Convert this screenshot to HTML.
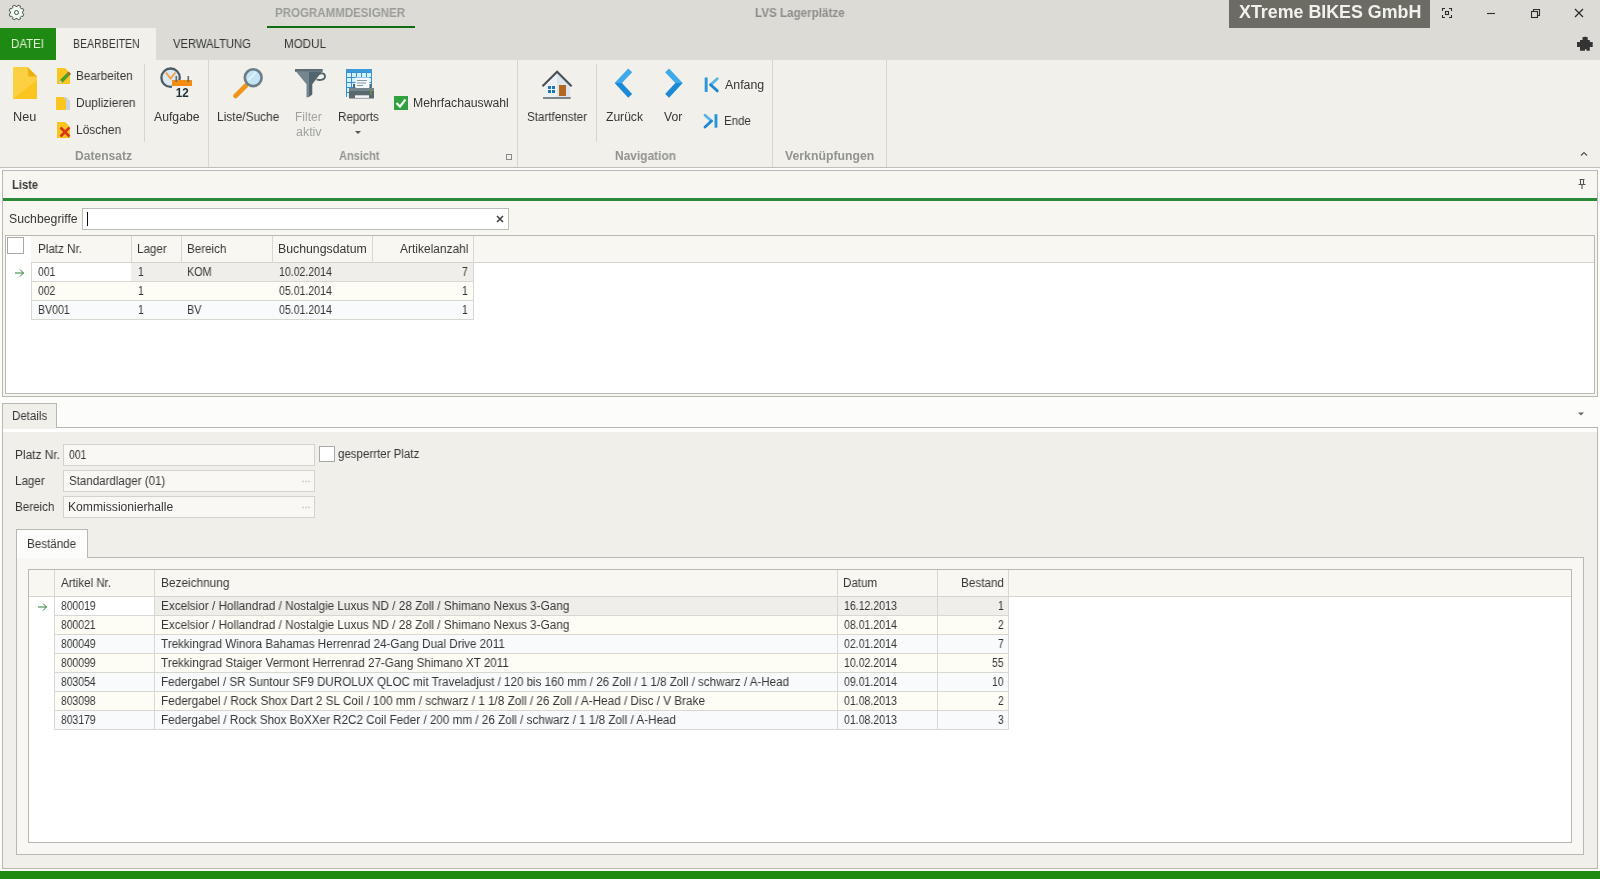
<!DOCTYPE html>
<html><head><meta charset="utf-8">
<style>
*{margin:0;padding:0;box-sizing:border-box}
html,body{width:1600px;height:879px;overflow:hidden;background:#fcfcfb;font-family:"Liberation Sans",sans-serif;font-size:12px;color:#3b3b3b}
.a{position:absolute}
.t{position:absolute;white-space:nowrap;transform-origin:0 0;will-change:transform}
svg{overflow:visible}
</style></head><body>
<div class="a" style="left:0px;top:0px;width:1600px;height:28px;background:#dcdbd5;"></div>
<svg class="a" style="left:7.5px;top:4px" width="17" height="17" viewBox="0 0 17 17"><path d="M14.55 9.31 L15.81 10.16 L14.84 12.50 L13.35 12.20 L12.20 13.35 L12.50 14.84 L10.16 15.81 L9.31 14.55 L7.69 14.55 L6.84 15.81 L4.50 14.84 L4.80 13.35 L3.65 12.20 L2.16 12.50 L1.19 10.16 L2.45 9.31 L2.45 7.69 L1.19 6.84 L2.16 4.50 L3.65 4.80 L4.80 3.65 L4.50 2.16 L6.84 1.19 L7.69 2.45 L9.31 2.45 L10.16 1.19 L12.50 2.16 L12.20 3.65 L13.35 4.80 L14.84 4.50 L15.81 6.84 L14.55 7.69Z" fill="#f2faf0" stroke="#4a504a" stroke-width="1"/><circle cx="8.5" cy="8.5" r="2" fill="none" stroke="#4a504a" stroke-width="1"/></svg>
<div class="t" style="left:275.23px;top:6.64px;font-size:12px;line-height:12px;color:#9b9b99;font-weight:bold;transform:scaleX(0.9606);">PROGRAMMDESIGNER</div>
<div class="a" style="left:267px;top:26px;width:148px;height:2px;background:#0f6c10;"></div>
<div class="t" style="left:754.82px;top:7.24px;font-size:12px;line-height:12px;color:#8d8d8b;font-weight:bold;transform:scaleX(0.9699);">LVS Lagerplätze</div>
<div class="a" style="left:1229px;top:0px;width:201px;height:28px;background:#6c6b64;"></div>
<div class="t" style="left:1238.84px;top:3.69px;font-size:17.5px;line-height:17.5px;color:#f2f2ec;font-weight:bold;transform:scaleX(1.0191);">XTreme BIKES GmbH</div>
<svg class="a" style="left:1440px;top:6px" width="150" height="14" viewBox="0 0 150 14">
<g fill="none" stroke="#2e2e2e" stroke-width="1.1">
<path d="M2.5 5V2.5H5M9 2.5H11.5V5M11.5 9V11.5H9M5 11.5H2.5V9"/>
<rect x="5.5" y="5.5" width="3" height="3"/>
<path d="M47 7.5H55"/>
<rect x="91.5" y="5.5" width="6" height="6"/><path d="M93.5 5.5V3.5H99.5V9.5H97.5"/>
<path d="M135 3L143 11M143 3L135 11" stroke-width="1.3"/>
</g></svg>
<div class="a" style="left:0px;top:28px;width:1600px;height:32px;background:#dcdbd5;"></div>
<div class="a" style="left:0px;top:28px;width:56px;height:32px;background:#1e8a14;"></div>
<div class="t" style="left:11.36px;top:37.64px;font-size:12px;line-height:12px;color:#e4f6d4;transform:scaleX(0.9581);">DATEI</div>
<div class="a" style="left:56px;top:28px;width:100px;height:32px;background:#f1f0eb;"></div>
<div class="t" style="left:72.84px;top:37.54px;font-size:12px;line-height:12px;color:#363636;transform:scaleX(0.8777);">BEARBEITEN</div>
<div class="t" style="left:172.95px;top:37.54px;font-size:12px;line-height:12px;color:#363636;transform:scaleX(0.9370);">VERWALTUNG</div>
<div class="t" style="left:283.75px;top:37.54px;font-size:12px;line-height:12px;color:#363636;transform:scaleX(0.9678);">MODUL</div>
<svg class="a" style="left:1570px;top:30px" width="30" height="30" viewBox="0 0 30 30">
<path fill="#333" d="M12.5 7.3Q15 6.3 17.7 7.3V10H19.8V12H22.7V17H19.8V20.8H16.5V19.3H15V20.8H10V17H7V12H10V10H12.5z"/></svg>
<div class="a" style="left:0px;top:60px;width:1600px;height:107px;background:#f1f0eb;"></div>
<div class="a" style="left:0px;top:167px;width:1600px;height:1px;background:#c0bfba;"></div>
<div class="a" style="left:208px;top:60px;width:1px;height:107px;background:#d6d5d0;"></div>
<div class="a" style="left:517px;top:60px;width:1px;height:107px;background:#d6d5d0;"></div>
<div class="a" style="left:772px;top:60px;width:1px;height:107px;background:#d6d5d0;"></div>
<div class="a" style="left:886px;top:60px;width:1px;height:107px;background:#d6d5d0;"></div>
<div class="a" style="left:144px;top:64px;width:1px;height:78px;background:#d6d5d0;"></div>
<div class="a" style="left:596px;top:64px;width:1px;height:78px;background:#d6d5d0;"></div>
<div class="t" style="left:75.49px;top:150.14px;font-size:12px;line-height:12px;color:#929290;font-weight:bold;transform:scaleX(1.0046);">Datensatz</div>
<div class="t" style="left:339.23px;top:150.14px;font-size:12px;line-height:12px;color:#929290;font-weight:bold;transform:scaleX(0.9184);">Ansicht</div>
<div class="t" style="left:614.80px;top:150.14px;font-size:12px;line-height:12px;color:#929290;font-weight:bold;transform:scaleX(0.9935);">Navigation</div>
<div class="t" style="left:784.52px;top:150.14px;font-size:12px;line-height:12px;color:#929290;font-weight:bold;transform:scaleX(1.0219);">Verknüpfungen</div>
<div class="a" style="left:506px;top:154px;width:6px;height:6px;border:1px solid #8a8a88;"></div>
<svg class="a" style="left:1579px;top:150px" width="10" height="8" viewBox="0 0 10 8"><path d="M2 5.5L5 2.5L8 5.5" fill="none" stroke="#555" stroke-width="1.2"/></svg>
<div class="t" style="left:13.36px;top:110.64px;font-size:12px;line-height:12px;color:#363636;transform:scaleX(1.0578);">Neu</div>
<div class="t" style="left:76.04px;top:70.34px;font-size:12px;line-height:12px;color:#363636;transform:scaleX(0.9773);">Bearbeiten</div>
<div class="t" style="left:76.02px;top:96.54px;font-size:12px;line-height:12px;color:#363636;transform:scaleX(0.9921);">Duplizieren</div>
<div class="t" style="left:76.02px;top:123.64px;font-size:12px;line-height:12px;color:#363636;transform:scaleX(0.9954);">Löschen</div>
<div class="t" style="left:154.48px;top:110.54px;font-size:12px;line-height:12px;color:#363636;transform:scaleX(1.0193);">Aufgabe</div>
<div class="t" style="left:217.22px;top:110.54px;font-size:12px;line-height:12px;color:#363636;transform:scaleX(0.9937);">Liste/Suche</div>
<div class="t" style="left:295.21px;top:110.54px;font-size:12px;line-height:12px;color:#a2a2a0;">Filter</div>
<div class="t" style="left:295.67px;top:125.84px;font-size:12px;line-height:12px;color:#a2a2a0;transform:scaleX(1.0364);">aktiv</div>
<div class="t" style="left:338.24px;top:110.54px;font-size:12px;line-height:12px;color:#363636;transform:scaleX(0.9705);">Reports</div>
<svg class="a" style="left:354px;top:130px" width="8" height="5" viewBox="0 0 8 5"><path d="M1 1H7L4 4z" fill="#555"/></svg>
<div class="t" style="left:413.30px;top:96.84px;font-size:12px;line-height:12px;color:#363636;transform:scaleX(1.0189);">Mehrfachauswahl</div>
<div class="t" style="left:526.77px;top:110.84px;font-size:12px;line-height:12px;color:#363636;transform:scaleX(0.9693);">Startfenster</div>
<div class="t" style="left:605.82px;top:110.84px;font-size:12px;line-height:12px;color:#363636;transform:scaleX(1.0080);">Zurück</div>
<div class="t" style="left:663.85px;top:110.84px;font-size:12px;line-height:12px;color:#363636;transform:scaleX(1.0136);">Vor</div>
<div class="t" style="left:724.58px;top:79.14px;font-size:12px;line-height:12px;color:#363636;transform:scaleX(1.0313);">Anfang</div>
<div class="t" style="left:723.66px;top:114.54px;font-size:12px;line-height:12px;color:#363636;transform:scaleX(0.9583);">Ende</div>
<svg class="a" style="left:0;top:60px" width="890" height="80" viewBox="0 60 890 80">
<!-- Neu -->
<path d="M13 67H27.5L37 76.5V99H13z" fill="#fbc520"/>
<path d="M13 67H27.5L37 76.5V80L13 99z" fill="#fdd451" opacity="0.7"/>
<path d="M27.5 67L37 76.5H28.5z" fill="#e9b212"/>
<!-- Bearbeiten -->
<path d="M57 68H65L70 73V84H57z" fill="#fbc520"/>
<path d="M58.5 83.5L60 80L67 73L69.5 75.5L62.5 82.5z" fill="#4c9e2a"/><path d="M67 73L68.5 71.5L71 74L69.5 75.5z" fill="#9a6420"/><path d="M58.5 83.5L60 80L62.5 82.5z" fill="#e8d8a0"/>
<!-- Duplizieren -->
<path d="M63 97H66L70 101V110H63z" fill="#c8d3dc"/>
<path d="M56 97H63L66 100V110H56z" fill="#fbc520"/>
<!-- Loeschen -->
<path d="M57 122H65L70 127V138H57z" fill="#fbc520"/>
<path d="M60.5 127.5L69.5 136.5M69.5 127.5L60.5 136.5" stroke="#d8361c" stroke-width="2.6"/>
<!-- Aufgabe -->
<circle cx="170.6" cy="77.7" r="9.2" fill="#dde8ef" stroke="#4b5c64" stroke-width="2.3"/>
<path d="M166 72.5L170.5 78.5L175.5 72.5" fill="none" stroke="#f0a040" stroke-width="1.8"/>
<rect x="172" y="80" width="20" height="6" fill="#f28d12"/>
<rect x="175.5" y="76" width="1.6" height="6" fill="#6a6a6a"/><rect x="187.5" y="76" width="1.6" height="6" fill="#6a6a6a"/>
<rect x="172" y="86" width="20" height="12" fill="#f1f0eb"/>
<text x="175.8" y="97.2" font-family="Liberation Sans" font-weight="bold" font-size="12" fill="#1f3036" textLength="13" lengthAdjust="spacingAndGlyphs">12</text>
<!-- Liste/Suche -->
<path d="M246 85.5L235.5 96" stroke="#f0951c" stroke-width="4.6" stroke-linecap="round"/>
<circle cx="253.2" cy="77.7" r="8.4" fill="#c5e3f6" stroke="#6a7c85" stroke-width="2.6"/>
<path d="M248.5 80L256 72.5" stroke="#e8f5fc" stroke-width="1.5"/>
<!-- Filter -->
<path d="M318 74.5C321 72.5 325 73 325 76.5C325 80 320 80.5 316.5 79.5" fill="none" stroke="#50626b" stroke-width="1.8"/>
<path d="M296 71.5H309V97L306.5 97.5V84.3z" fill="#74868f"/>
<path d="M309 71.5H322L312.3 84.3V94.5L309 97z" fill="#52656e"/>
<rect x="295" y="69" width="27.7" height="2.8" fill="#5d6e76"/>
<!-- Reports -->
<rect x="346.5" y="69" width="25.5" height="28" fill="#d2f1fc"/>
<g stroke="#3a8fcf" stroke-width="1"><path d="M346.5 69V97M351.5 72V97M356.5 72V97M361.5 72V97M366.5 72V97M371.5 69V97M346.5 72.5H372M346.5 77.5H372M346.5 82.5H372M346.5 87.5H372M346.5 92.5H372"/></g>
<rect x="346.5" y="69" width="25.5" height="3" fill="#3d9bd9"/>
<rect x="355.5" y="77.5" width="14" height="11" fill="#f2f8fb"/>
<path d="M357 80.5H367M357 83H366M357 85.5H363" stroke="#8a9aa2" stroke-width="1"/>
<rect x="353" y="84" width="2" height="5" fill="#56656c"/><rect x="369.5" y="84" width="2" height="5" fill="#56656c"/>
<path d="M349 89.5Q349 88 350.5 88H372.5Q374 88 374 89.5V98.5H349z" fill="#5a6870"/>
<rect x="349" y="88" width="25" height="3" fill="#76848b"/>
<rect x="355" y="95.3" width="14" height="2.6" fill="#f4f4f4"/>
<rect x="370.3" y="89" width="1.3" height="6" fill="#5a9a4a"/>
<!-- Mehrfachauswahl checkbox -->
<rect x="394" y="96" width="14" height="14" fill="#30a040"/>
<path d="M396.5 103L400 106.5L405.5 99.5" fill="none" stroke="#f2fff0" stroke-width="2.2"/>
<!-- house -->
<path d="M544.5 84L557 73L570 84V97H544.5z" fill="#eef2f6"/>
<path d="M557 73L570 84V97H557z" fill="#dde5ec"/>
<path d="M542.5 86.3L557.1 71.8L571.6 86.3" fill="none" stroke="#4a5258" stroke-width="2.2"/>
<rect x="548" y="86" width="3" height="3" fill="#1d76b5"/><rect x="552" y="86" width="3" height="3" fill="#1d76b5"/>
<rect x="548" y="90" width="3" height="3" fill="#1d76b5"/><rect x="552" y="90" width="3" height="3" fill="#1d76b5"/>
<rect x="559" y="85" width="7" height="11" fill="#b5661f"/>
<rect x="543" y="97" width="27.7" height="2" fill="#7d858a"/>
<!-- chevrons -->
<path d="M628.22 68.46 L614.61 83.10 L621.99 83.10 L632.18 72.14Z" fill="#3fa9ea"/>
<path d="M628.22 97.74 L614.61 83.10 L621.99 83.10 L632.18 94.06Z" fill="#1b89d5"/>
<path d="M665.12 72.14 L675.31 83.10 L682.69 83.10 L669.08 68.46Z" fill="#3fa9ea"/>
<path d="M665.12 94.06 L675.31 83.10 L682.69 83.10 L669.08 97.74Z" fill="#1b89d5"/>
<!-- Anfang -->
<rect x="704.7" y="77.5" width="2.9" height="14.4" fill="#2b94d8"/>
<path d="M717.3 78.8L710.6 84.8" stroke="#58b4e8" stroke-width="2.8" stroke-linecap="round"/>
<path d="M710.6 84.8L717.3 90.9" stroke="#1d88d2" stroke-width="2.8" stroke-linecap="round"/>
<!-- Ende -->
<rect x="714.5" y="114.2" width="2.9" height="13.5" fill="#2b94d8"/>
<path d="M705 115.2L711.5 121" stroke="#58b4e8" stroke-width="2.8" stroke-linecap="round"/>
<path d="M711.5 121L705 127" stroke="#1d88d2" stroke-width="2.8" stroke-linecap="round"/>
</svg>
<div class="a" style="left:2px;top:170px;width:1596px;height:227px;background:#f7f6f1;border:1px solid #b9b8b3;"></div>
<div class="t" style="left:12.00px;top:179.34px;font-size:12px;line-height:12px;color:#3a3a3a;font-weight:bold;transform:scaleX(0.9331);">Liste</div>
<div class="a" style="left:3px;top:198px;width:1594px;height:3px;background:#2a8a3a;"></div>
<svg class="a" style="left:1577px;top:178px" width="10" height="12" viewBox="0 0 10 12"><path d="M2.5 1.5H7.5M3.5 1.5V6.5M6.5 1.5V6.5M1.5 6.5H8.5M5 6.5V11" fill="none" stroke="#555" stroke-width="1.1"/></svg>
<div class="t" style="left:9.44px;top:212.54px;font-size:12px;line-height:12px;color:#363636;transform:scaleX(1.0215);">Suchbegriffe</div>
<div class="a" style="left:82px;top:208px;width:427px;height:22px;background:#ffffff;border:1px solid #bdbcb7;"></div>
<div class="a" style="left:87px;top:212px;width:1px;height:14px;background:#111111;"></div>
<svg class="a" style="left:495px;top:214px" width="10" height="10" viewBox="0 0 10 10"><path d="M2 2L8 8M8 2L2 8" stroke="#444" stroke-width="1.6"/></svg>
<div class="a" style="left:5px;top:235px;width:1590px;height:159px;background:#ffffff;border:1px solid #b9b8b3;"></div>
<div class="a" style="left:31px;top:236px;width:1563px;height:26px;background:#f8f7f2;"></div>
<div class="a" style="left:31px;top:262px;width:1563px;height:1px;background:#d4d3ce;"></div>
<div class="a" style="left:7px;top:237px;width:17px;height:17px;background:#ffffff;border:1px solid #a9a8a4;"></div>
<div class="a" style="left:31px;top:262px;width:1px;height:57px;background:#d8d7d2;"></div>
<div class="a" style="left:131px;top:236px;width:1px;height:83px;background:#d8d7d2;"></div>
<div class="a" style="left:181px;top:236px;width:1px;height:83px;background:#d8d7d2;"></div>
<div class="a" style="left:272px;top:236px;width:1px;height:83px;background:#d8d7d2;"></div>
<div class="a" style="left:372px;top:236px;width:1px;height:83px;background:#d8d7d2;"></div>
<div class="a" style="left:473px;top:236px;width:1px;height:83px;background:#d8d7d2;"></div>
<div class="t" style="left:37.65px;top:243.24px;font-size:12px;line-height:12px;color:#363636;transform:scaleX(0.9692);">Platz Nr.</div>
<div class="t" style="left:137.45px;top:243.24px;font-size:12px;line-height:12px;color:#363636;transform:scaleX(0.9689);">Lager</div>
<div class="t" style="left:187.35px;top:243.24px;font-size:12px;line-height:12px;color:#363636;transform:scaleX(0.9681);">Bereich</div>
<div class="t" style="left:278.49px;top:243.24px;font-size:12px;line-height:12px;color:#363636;transform:scaleX(1.0242);">Buchungsdatum</div>
<div class="t" style="left:400.08px;top:243.24px;font-size:12px;line-height:12px;color:#363636;transform:scaleX(0.9960);">Artikelanzahl</div>
<div class="a" style="left:32px;top:263px;width:441px;height:18px;background:#efeeea;"></div>
<div class="a" style="left:32px;top:263px;width:99px;height:18px;background:#ffffff;"></div>
<div class="a" style="left:31px;top:281px;width:443px;height:1px;background:#d8d7d2;"></div>
<div class="t" style="left:37.99px;top:266.44px;font-size:12px;line-height:12px;color:#363636;transform:scaleX(0.8650);">001</div>
<div class="t" style="left:137.61px;top:266.44px;font-size:12px;line-height:12px;color:#363636;transform:scaleX(0.8650);">1</div>
<div class="t" style="left:187.41px;top:266.44px;font-size:12px;line-height:12px;color:#363636;transform:scaleX(0.9030);">KOM</div>
<div class="t" style="left:278.50px;top:266.44px;font-size:12px;line-height:12px;color:#363636;transform:scaleX(0.8794);">10.02.2014</div>
<div class="t" style="left:462.45px;top:266.44px;font-size:12px;line-height:12px;color:#363636;transform:scaleX(0.8650);">7</div>
<div class="a" style="left:32px;top:282px;width:441px;height:18px;background:#fdfcf5;"></div>
<div class="a" style="left:31px;top:300px;width:443px;height:1px;background:#d8d7d2;"></div>
<div class="t" style="left:37.99px;top:285.44px;font-size:12px;line-height:12px;color:#363636;transform:scaleX(0.8650);">002</div>
<div class="t" style="left:137.61px;top:285.44px;font-size:12px;line-height:12px;color:#363636;transform:scaleX(0.8650);">1</div>
<div class="t" style="left:278.89px;top:285.44px;font-size:12px;line-height:12px;color:#363636;transform:scaleX(0.8794);">05.01.2014</div>
<div class="t" style="left:462.43px;top:285.44px;font-size:12px;line-height:12px;color:#363636;transform:scaleX(0.8650);">1</div>
<div class="a" style="left:32px;top:301px;width:441px;height:18px;background:#f9fafb;"></div>
<div class="a" style="left:31px;top:319px;width:443px;height:1px;background:#d8d7d2;"></div>
<div class="t" style="left:37.53px;top:304.44px;font-size:12px;line-height:12px;color:#363636;transform:scaleX(0.8819);">BV001</div>
<div class="t" style="left:137.61px;top:304.44px;font-size:12px;line-height:12px;color:#363636;transform:scaleX(0.8650);">1</div>
<div class="t" style="left:187.41px;top:304.44px;font-size:12px;line-height:12px;color:#363636;transform:scaleX(0.9030);">BV</div>
<div class="t" style="left:278.89px;top:304.44px;font-size:12px;line-height:12px;color:#363636;transform:scaleX(0.8794);">05.01.2014</div>
<div class="t" style="left:462.43px;top:304.44px;font-size:12px;line-height:12px;color:#363636;transform:scaleX(0.8650);">1</div>
<svg class="a" style="left:13.5px;top:267.5px" width="12" height="10" viewBox="0 0 12 10"><path d="M1 5H9.5M6 1.5L9.5 5L6 8.5" fill="none" stroke="#2f7d34" stroke-width="1"/></svg>
<div class="a" style="left:2px;top:427px;width:1596px;height:442px;background:#ffffff;border:1px solid #b9b8b3;"></div>
<div class="a" style="left:2px;top:403px;width:55px;height:25px;background:#f0efea;border:1px solid #b9b8b3;border-bottom:none;"></div>
<div class="a" style="left:3px;top:427px;width:53px;height:2px;background:#f0efea;"></div>
<div class="t" style="left:11.86px;top:409.94px;font-size:12px;line-height:12px;color:#363636;transform:scaleX(0.9586);">Details</div>
<svg class="a" style="left:1577px;top:411px" width="8" height="6" viewBox="0 0 8 6"><path d="M1 1.5H7L4 4.5z" fill="#666"/></svg>
<div class="a" style="left:3px;top:432px;width:1594px;height:436px;background:#f0efea;"></div>
<div class="t" style="left:15.33px;top:448.64px;font-size:12px;line-height:12px;color:#363636;transform:scaleX(0.9893);">Platz Nr.</div>
<div class="t" style="left:15.35px;top:474.64px;font-size:12px;line-height:12px;color:#363636;transform:scaleX(0.9689);">Lager</div>
<div class="t" style="left:15.35px;top:501.04px;font-size:12px;line-height:12px;color:#363636;transform:scaleX(0.9681);">Bereich</div>
<div class="a" style="left:63px;top:444px;width:252px;height:22px;background:#f9f8f4;border:1px solid #d3d2cd;"></div>
<div class="a" style="left:63px;top:470px;width:252px;height:22px;background:#f9f8f4;border:1px solid #d3d2cd;"></div>
<div class="a" style="left:63px;top:496px;width:252px;height:22px;background:#f9f8f4;border:1px solid #d3d2cd;"></div>
<div class="t" style="left:68.99px;top:448.64px;font-size:12px;line-height:12px;color:#363636;transform:scaleX(0.8650);">001</div>
<div class="t" style="left:68.88px;top:474.64px;font-size:12px;line-height:12px;color:#363636;transform:scaleX(0.9619);">Standardlager (01)</div>
<div class="t" style="left:68.40px;top:501.04px;font-size:12px;line-height:12px;color:#363636;transform:scaleX(1.0115);">Kommissionierhalle</div>
<svg class="a" style="left:301px;top:480px" width="10" height="3" viewBox="0 0 10 3"><path d="M1.5 1.5h1M4.5 1.5h1M7.5 1.5h1" stroke="#a8a8a6" stroke-width="1.4"/></svg>
<svg class="a" style="left:301px;top:506px" width="10" height="3" viewBox="0 0 10 3"><path d="M1.5 1.5h1M4.5 1.5h1M7.5 1.5h1" stroke="#a8a8a6" stroke-width="1.4"/></svg>
<div class="a" style="left:319px;top:446px;width:16px;height:16px;background:#ffffff;border:1px solid #a9a8a4;"></div>
<div class="t" style="left:338.27px;top:448.14px;font-size:12px;line-height:12px;color:#363636;transform:scaleX(0.9594);">gesperrter Platz</div>
<div class="a" style="left:16px;top:557px;width:1568px;height:298px;background:#f8f7f3;border:1px solid #b9b8b3;"></div>
<div class="a" style="left:16px;top:529px;width:72px;height:29px;background:#fcfcfa;border:1px solid #b9b8b3;border-bottom:none;"></div>
<div class="t" style="left:27.45px;top:538.14px;font-size:12px;line-height:12px;color:#363636;transform:scaleX(0.9678);">Bestände</div>
<div class="a" style="left:28px;top:569px;width:1544px;height:274px;background:#ffffff;border:1px solid #b9b8b3;"></div>
<div class="a" style="left:29px;top:570px;width:1542px;height:26px;background:#f8f7f2;"></div>
<div class="a" style="left:29px;top:596px;width:1542px;height:1px;background:#d4d3ce;"></div>
<div class="a" style="left:55px;top:597px;width:953px;height:18px;background:#efeeea;"></div>
<div class="a" style="left:55px;top:597px;width:99px;height:18px;background:#ffffff;"></div>
<div class="a" style="left:54px;top:615px;width:955px;height:1px;background:#d8d7d2;"></div>
<div class="t" style="left:60.95px;top:600.34px;font-size:12px;line-height:12px;color:#363636;transform:scaleX(0.8650);">800019</div>
<div class="t" style="left:160.54px;top:600.34px;font-size:12px;line-height:12px;color:#363636;transform:scaleX(0.9796);">Excelsior / Hollandrad / Nostalgie Luxus ND / 28 Zoll / Shimano Nexus 3-Gang</div>
<div class="t" style="left:843.60px;top:600.34px;font-size:12px;line-height:12px;color:#363636;transform:scaleX(0.8794);">16.12.2013</div>
<div class="t" style="left:997.73px;top:600.34px;font-size:12px;line-height:12px;color:#363636;transform:scaleX(0.8650);">1</div>
<div class="a" style="left:55px;top:616px;width:953px;height:18px;background:#fdfcf5;"></div>
<div class="a" style="left:54px;top:634px;width:955px;height:1px;background:#d8d7d2;"></div>
<div class="t" style="left:60.95px;top:619.34px;font-size:12px;line-height:12px;color:#363636;transform:scaleX(0.8650);">800021</div>
<div class="t" style="left:160.54px;top:619.34px;font-size:12px;line-height:12px;color:#363636;transform:scaleX(0.9796);">Excelsior / Hollandrad / Nostalgie Luxus ND / 28 Zoll / Shimano Nexus 3-Gang</div>
<div class="t" style="left:843.99px;top:619.34px;font-size:12px;line-height:12px;color:#363636;transform:scaleX(0.8794);">08.01.2014</div>
<div class="t" style="left:997.75px;top:619.34px;font-size:12px;line-height:12px;color:#363636;transform:scaleX(0.8650);">2</div>
<div class="a" style="left:55px;top:635px;width:953px;height:18px;background:#f9fafb;"></div>
<div class="a" style="left:54px;top:653px;width:955px;height:1px;background:#d8d7d2;"></div>
<div class="t" style="left:60.95px;top:638.34px;font-size:12px;line-height:12px;color:#363636;transform:scaleX(0.8650);">800049</div>
<div class="t" style="left:161.24px;top:638.34px;font-size:12px;line-height:12px;color:#363636;transform:scaleX(0.9706);">Trekkingrad Winora Bahamas Herrenrad 24-Gang Dual Drive 2011</div>
<div class="t" style="left:843.99px;top:638.34px;font-size:12px;line-height:12px;color:#363636;transform:scaleX(0.8794);">02.01.2014</div>
<div class="t" style="left:997.75px;top:638.34px;font-size:12px;line-height:12px;color:#363636;transform:scaleX(0.8650);">7</div>
<div class="a" style="left:55px;top:654px;width:953px;height:18px;background:#fdfcf5;"></div>
<div class="a" style="left:54px;top:672px;width:955px;height:1px;background:#d8d7d2;"></div>
<div class="t" style="left:60.95px;top:657.34px;font-size:12px;line-height:12px;color:#363636;transform:scaleX(0.8650);">800099</div>
<div class="t" style="left:161.24px;top:657.34px;font-size:12px;line-height:12px;color:#363636;transform:scaleX(0.9718);">Trekkingrad Staiger Vermont Herrenrad 27-Gang Shimano XT 2011</div>
<div class="t" style="left:843.60px;top:657.34px;font-size:12px;line-height:12px;color:#363636;transform:scaleX(0.8794);">10.02.2014</div>
<div class="t" style="left:991.89px;top:657.34px;font-size:12px;line-height:12px;color:#363636;transform:scaleX(0.8650);">55</div>
<div class="a" style="left:55px;top:673px;width:953px;height:18px;background:#f9fafb;"></div>
<div class="a" style="left:54px;top:691px;width:955px;height:1px;background:#d8d7d2;"></div>
<div class="t" style="left:60.95px;top:676.34px;font-size:12px;line-height:12px;color:#363636;transform:scaleX(0.8650);">803054</div>
<div class="t" style="left:160.55px;top:676.34px;font-size:12px;line-height:12px;color:#363636;transform:scaleX(0.9667);">Federgabel / SR Suntour SF9 DUROLUX QLOC mit Traveladjust / 120 bis 160 mm / 26 Zoll / 1 1/8 Zoll / schwarz / A-Head</div>
<div class="t" style="left:843.99px;top:676.34px;font-size:12px;line-height:12px;color:#363636;transform:scaleX(0.8794);">09.01.2014</div>
<div class="t" style="left:991.86px;top:676.34px;font-size:12px;line-height:12px;color:#363636;transform:scaleX(0.8650);">10</div>
<div class="a" style="left:55px;top:692px;width:953px;height:18px;background:#fdfcf5;"></div>
<div class="a" style="left:54px;top:710px;width:955px;height:1px;background:#d8d7d2;"></div>
<div class="t" style="left:60.95px;top:695.34px;font-size:12px;line-height:12px;color:#363636;transform:scaleX(0.8650);">803098</div>
<div class="t" style="left:160.54px;top:695.34px;font-size:12px;line-height:12px;color:#363636;transform:scaleX(0.9799);">Federgabel / Rock Shox Dart 2 SL Coil / 100 mm / schwarz / 1 1/8 Zoll / 26 Zoll / A-Head / Disc / V Brake</div>
<div class="t" style="left:843.99px;top:695.34px;font-size:12px;line-height:12px;color:#363636;transform:scaleX(0.8794);">01.08.2013</div>
<div class="t" style="left:997.75px;top:695.34px;font-size:12px;line-height:12px;color:#363636;transform:scaleX(0.8650);">2</div>
<div class="a" style="left:55px;top:711px;width:953px;height:18px;background:#f9fafb;"></div>
<div class="a" style="left:54px;top:729px;width:955px;height:1px;background:#d8d7d2;"></div>
<div class="t" style="left:60.95px;top:714.34px;font-size:12px;line-height:12px;color:#363636;transform:scaleX(0.8650);">803179</div>
<div class="t" style="left:160.54px;top:714.34px;font-size:12px;line-height:12px;color:#363636;transform:scaleX(0.9736);">Federgabel / Rock Shox BoXXer R2C2 Coil Feder / 200 mm / 26 Zoll / schwarz / 1 1/8 Zoll / A-Head</div>
<div class="t" style="left:843.99px;top:714.34px;font-size:12px;line-height:12px;color:#363636;transform:scaleX(0.8794);">01.08.2013</div>
<div class="t" style="left:997.68px;top:714.34px;font-size:12px;line-height:12px;color:#363636;transform:scaleX(0.8650);">3</div>
<div class="a" style="left:54px;top:570px;width:1px;height:159px;background:#d8d7d2;"></div>
<div class="a" style="left:154px;top:570px;width:1px;height:159px;background:#d8d7d2;"></div>
<div class="a" style="left:837px;top:570px;width:1px;height:159px;background:#d8d7d2;"></div>
<div class="a" style="left:937px;top:570px;width:1px;height:159px;background:#d8d7d2;"></div>
<div class="a" style="left:1008px;top:570px;width:1px;height:159px;background:#d8d7d2;"></div>
<div class="t" style="left:61.38px;top:577.34px;font-size:12px;line-height:12px;color:#363636;transform:scaleX(0.9627);">Artikel Nr.</div>
<div class="t" style="left:160.53px;top:577.34px;font-size:12px;line-height:12px;color:#363636;transform:scaleX(0.9865);">Bezeichnung</div>
<div class="t" style="left:843.45px;top:577.34px;font-size:12px;line-height:12px;color:#363636;transform:scaleX(0.9691);">Datum</div>
<div class="t" style="left:960.74px;top:577.34px;font-size:12px;line-height:12px;color:#363636;transform:scaleX(0.9769);">Bestand</div>
<svg class="a" style="left:36.5px;top:601.5px" width="12" height="10" viewBox="0 0 12 10"><path d="M1 5H9.5M6 1.5L9.5 5L6 8.5" fill="none" stroke="#2f7d34" stroke-width="1"/></svg>
<div class="a" style="left:0px;top:869px;width:1600px;height:2px;background:#f8f8f6;"></div>
<div class="a" style="left:0px;top:871px;width:1600px;height:8px;background:#1f8a0f;"></div>
</body></html>
